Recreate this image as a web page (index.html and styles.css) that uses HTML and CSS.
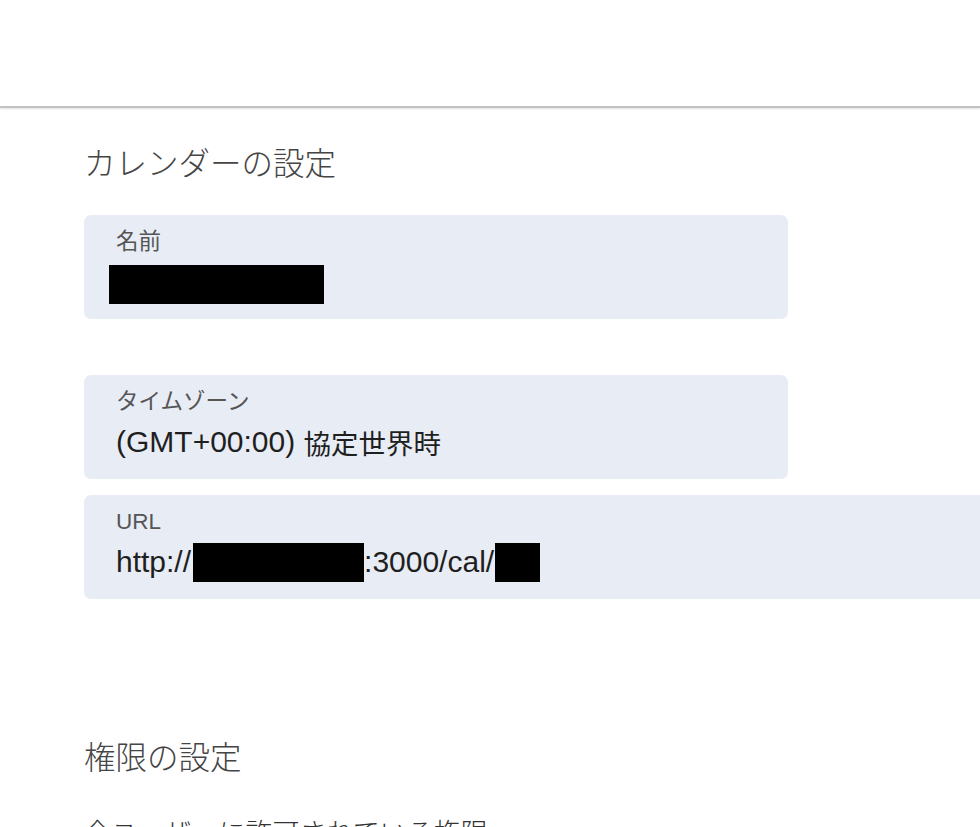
FILE: index.html
```html
<!DOCTYPE html>
<html lang="ja">
<head>
<meta charset="utf-8">
<title>カレンダーの設定</title>
<link rel="stylesheet" href="styles.css">
</head>
<body>
<header class="topbar"></header>
<main class="content">
  <section class="section">
    <h2 class="section-title">カレンダーの設定</h2>
    <div class="field field-wide-gap">
      <div class="field-label">名前</div>
      <div class="field-value"><span class="redact redact-name"></span></div>
    </div>
    <div class="field">
      <div class="field-label">タイムゾーン</div>
      <div class="field-value">(GMT+00:00)&nbsp;<span class="ja">協定世界時</span></div>
    </div>
    <div class="field field-url">
      <div class="field-label">URL</div>
      <div class="field-value">http://<span class="redact redact-host"></span>:3000/cal/<span class="redact redact-id"></span></div>
    </div>
  </section>
  <section class="section section-perm">
    <h2 class="section-title">権限の設定</h2>
    <p class="sub-title">全ユーザーに許可されている権限</p>
  </section>
</main>
</body>
</html>
```
FILE: styles.css
```css
html, body {
  margin: 0;
  padding: 0;
  background: #ffffff;
  overflow-x: hidden;
}
body {
  font-family: "Liberation Sans", "Noto Sans CJK JP", sans-serif;
  color: #222;
  width: 980px;
  height: 827px;
  overflow: hidden;
}
.topbar {
  height: 106px;
  background: #fff;
  border-bottom: 2px solid #c2c2c2;
  box-shadow: 0 1px 2px rgba(0,0,0,0.12);
}
.content {
  padding-left: 84px;
}
.section-title {
  margin: 0;
  font-family: "Noto Sans CJK JP", sans-serif;
  font-weight: 300;
  font-size: 31.5px;
  line-height: 40px;
  color: #454545;
}
.section:first-child {
  padding-top: 33px;
}
.section:first-child .section-title {
  margin-bottom: 34px;
}
.field {
  width: 704px;
  box-sizing: border-box;
  background: #e8ecf5;
  border-radius: 7px;
  padding: 12px 32px;
  margin-bottom: 16px;
}
.field-wide-gap {
  margin-bottom: 56px;
}
.field-label {
  font-size: 22.5px;
  line-height: 30px;
  color: #555;
}
.field-value {
  font-size: 30px;
  min-height: 50px;
  color: #1f1f1f;
  white-space: nowrap;
  display: flex;
  align-items: center;
}
.ja {
  font-family: "Noto Sans CJK JP", sans-serif;
  font-size: 27.5px;
}
.field-url {
  width: 940px;
  border-radius: 7px 0 0 7px;
}
.redact {
  display: inline-block;
  background: #000;
  height: 39px;
}
.redact-name {
  width: 215px;
  margin-left: -7px;
  margin-top: 5px;
}
.redact-host {
  width: 171px;
  margin-left: 2px;
}
.redact-id {
  width: 45px;
  margin-left: 1px;
}
.section-perm {
  padding-top: 120px;
}
.sub-title {
  margin: 39px 0 0 0;
  font-family: "Noto Sans CJK JP", sans-serif;
  font-weight: 300;
  font-size: 27px;
  line-height: 36px;
  color: #333;
}
```
